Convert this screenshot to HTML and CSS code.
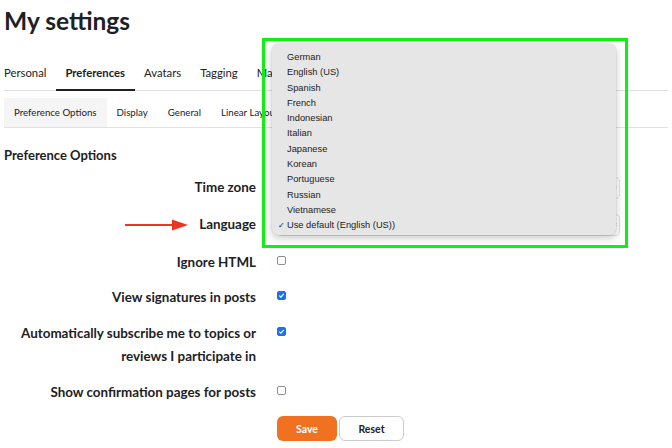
FILE: index.html
```html
<!DOCTYPE html>
<html lang="en">
<head>
    <meta charset="UTF-8">
    <meta name="viewport" content="width=device-width, initial-scale=1.0">
    <title>My settings</title>
    <link rel="stylesheet" href="styles.css">
</head>
<body>
    <div class="page">
        <h1 class="title">My settings</h1>

        <nav class="tabs">
            <a href="#" class="tab">Personal</a>
            <a href="#" class="tab active">Preferences</a>
            <a href="#" class="tab">Avatars</a>
            <a href="#" class="tab">Tagging</a>
            <a href="#" class="tab">Manage</a>
        </nav>

        <nav class="subtabs">
            <a href="#" class="subtab active">Preference Options</a>
            <a href="#" class="subtab">Display</a>
            <a href="#" class="subtab">General</a>
            <a href="#" class="subtab">Linear Layout</a>
        </nav>

        <h2 class="section">Preference Options</h2>

        <div class="form">
            <div class="row row-select">
                <div class="label">Time zone</div>
                <div class="control">
                    <div class="select">
                        <svg class="caret" width="5" height="7" viewBox="0 0 5 7"><path d="M1 2.5 L2.5 1 L4 2.5 M1 4.5 L2.5 6 L4 4.5" fill="none" stroke="#666" stroke-width="0.8"/></svg>
                    </div>
                </div>
            </div>
            <div class="row row-select2">
                <div class="label">
                    <svg class="arrow" width="64" height="12" viewBox="0 0 64 12"><path d="M0 6 H50" stroke="#ee3322" stroke-width="2.2"/><path d="M47 0.5 L63 6 L47 11.5 Z" fill="#ee3322"/></svg>
                    <span>Language</span>
                </div>
                <div class="control">
                    <div class="select">
                        <svg class="caret" width="5" height="7" viewBox="0 0 5 7"><path d="M1 2.5 L2.5 1 L4 2.5 M1 4.5 L2.5 6 L4 4.5" fill="none" stroke="#666" stroke-width="0.8"/></svg>
                    </div>
                </div>
            </div>
            <div class="row row-a">
                <div class="label">Ignore HTML</div>
                <div class="control"><span class="check"></span></div>
            </div>
            <div class="row">
                <div class="label">View signatures in posts</div>
                <div class="control"><span class="check on"><svg width="7" height="7" viewBox="0 0 7 7"><path d="M1.3 3.6 L2.9 5.1 L5.8 1.8" fill="none" stroke="#fff" stroke-width="1.2"/></svg></span></div>
            </div>
            <div class="row">
                <div class="label multi">Automatically subscribe me to topics or<br>reviews I participate in</div>
                <div class="control"><span class="check on"><svg width="7" height="7" viewBox="0 0 7 7"><path d="M1.3 3.6 L2.9 5.1 L5.8 1.8" fill="none" stroke="#fff" stroke-width="1.2"/></svg></span></div>
            </div>
            <div class="row row-last">
                <div class="label">Show confirmation pages for posts</div>
                <div class="control"><span class="check"></span></div>
            </div>
            <div class="row">
                <div class="label"></div>
                <div class="control buttons">
                    <button class="btn btn-save">Save</button>
                    <button class="btn btn-reset">Reset</button>
                </div>
            </div>
        </div>

        <!-- open language dropdown -->
        <ul class="popup">
            <li>German</li>
            <li>English (US)</li>
            <li>Spanish</li>
            <li>French</li>
            <li>Indonesian</li>
            <li>Italian</li>
            <li>Japanese</li>
            <li>Korean</li>
            <li>Portuguese</li>
            <li>Russian</li>
            <li>Vietnamese</li>
            <li class="selected">Use default (English (US))</li>
        </ul>
        <div class="highlight"></div>
    </div>
</body>
</html>
```

FILE: styles.css
```css
body { margin: 0; font-family: Lato, "Open Sans", sans-serif; color: #1d2125; background: #fff; }
.page { position: relative; padding: 0 4px; height: 448px; overflow: hidden; }

.title { font-size: 24.5px; line-height: 30px; font-weight: 700; margin: 6px 0 0; }

.tabs { display: flex; margin-top: 20px; border-bottom: 1px solid #dee2e6; }
.tab { font-size: 11.3px; line-height: 18px; padding: 8px 9.5px 7px; color: #1d2125; text-decoration: none; border-bottom: 2px solid transparent; margin-bottom: -1px; }
.tab:first-child { padding-left: 0; }
.tab.active { font-weight: 700; border-bottom-color: #1d2125; }

.subtabs { display: flex; margin-top: 7px; border-bottom: 1px solid #dee2e6; }
.subtab { font-size: 9.7px; line-height: 15px; padding: 7px 10px; color: #1d2125; text-decoration: none; }
.subtab.active { background: #f5f5f5; }

.section { font-size: 13px; line-height: 20px; font-weight: 700; margin: 17px 0 0; }

.form { margin-top: 11px; }
.row { display: flex; margin-bottom: 13px; }
.row-select { margin-bottom: 14px; }
.row-select2 { margin-bottom: 15px; }
.row-a { margin-bottom: 12px; }
.row-last { margin-bottom: 12px; }
.label { width: 252px; flex: none; text-align: right; font-size: 13.4px; font-weight: 700; line-height: 23px; display: flex; justify-content: flex-end; align-items: center; }
.label.multi { display: block; }
.arrow { margin-right: 10px; }
.control { margin-left: 21px; display: flex; align-items: flex-start; }

.select { width: 343px; height: 22px; box-sizing: border-box; margin-top: 0.5px; border: 1px solid #dee2e6; border-radius: 4px; display: flex; align-items: center; justify-content: flex-end; padding: 0 2px 0 8px; }
.caret { flex: none; }

.check { width: 9px; height: 9px; box-sizing: border-box; margin-top: 5px; border: 1px solid #8f8f8f; border-radius: 2px; background: #fff; display: flex; align-items: center; justify-content: center; }
.check.on { background: #1a73e8; border-color: #1a73e8; }

.buttons { gap: 2px; }
.btn { height: 25px; border-radius: 6px; font-family: Lato, sans-serif; font-size: 10.5px; font-weight: 700; cursor: pointer; }
.btn-save { width: 60px; background: #f0711f; color: #fff; border: none; }
.btn-reset { width: 65px; background: #fff; color: #1d2125; border: 1px solid #ccc; }

.popup { position: absolute; left: 272px; top: 44px; width: 344px; margin: 0; padding: 6px 0 1px; list-style: none; background: #e6e6e6; border-radius: 6px; box-shadow: 0 3px 8px rgba(0,0,0,0.22), 0 0 0 0.5px rgba(0,0,0,0.08); font-family: "Liberation Sans", Arial, sans-serif; font-size: 9.3px; color: #222; box-sizing: border-box; }
.popup li { line-height: 15.3px; padding-left: 15px; position: relative; }
.popup li.selected::before { content: "\2713"; position: absolute; left: 6px; font-size: 8px; }

.highlight { position: absolute; left: 262px; top: 38px; width: 366px; height: 210px; box-sizing: border-box; border: 3px solid #10f010; }
```
